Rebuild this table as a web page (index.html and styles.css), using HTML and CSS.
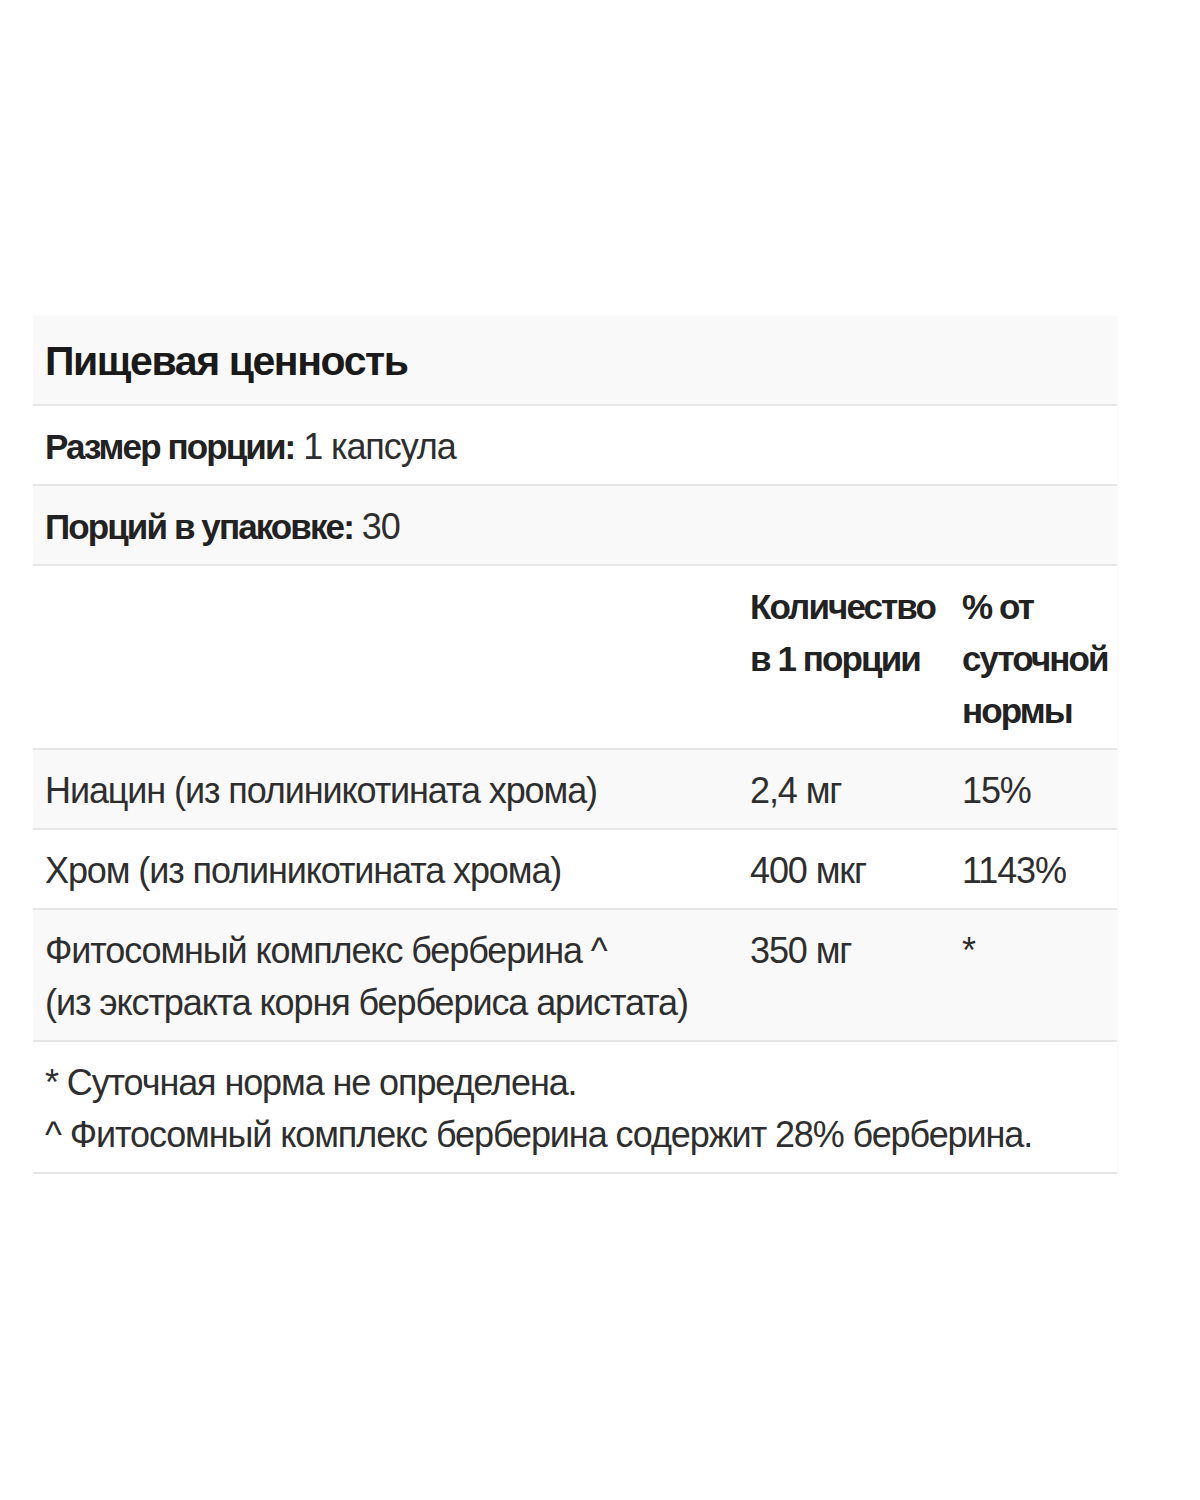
FILE: index.html
```html
<!DOCTYPE html>
<html lang="ru">
<head>
<meta charset="utf-8">
<link rel="stylesheet" href="styles.css">
</head>
<body>
<div class="page">
  <table class="facts">
    <tr class="title-row"><td colspan="3" class="title">Пищевая ценность</td></tr>
    <tr class="row"><td colspan="3"><b>Размер порции:</b> 1 капсула</td></tr>
    <tr class="row alt"><td colspan="3"><b>Порций в упаковке:</b> 30</td></tr>
    <tr class="row head">
      <td class="c1"></td>
      <td class="c2"><b>Количество в&nbsp;1&nbsp;порции</b></td>
      <td class="c3"><b>% от суточной нормы</b></td>
    </tr>
    <tr class="row alt">
      <td class="c1">Ниацин (из полиникотината хрома)</td>
      <td class="c2">2,4 мг</td>
      <td class="c3">15%</td>
    </tr>
    <tr class="row">
      <td class="c1">Хром (из полиникотината хрома)</td>
      <td class="c2">400 мкг</td>
      <td class="c3">1143%</td>
    </tr>
    <tr class="row alt">
      <td class="c1">Фитосомный комплекс берберина ^<br>(из экстракта корня бербериса аристата)</td>
      <td class="c2">350 мг</td>
      <td class="c3">*</td>
    </tr>
    <tr class="row">
      <td colspan="3">* Суточная норма не определена.<br>^ Фитосомный комплекс берберина содержит 28% берберина.</td>
    </tr>
  </table>
</div>
</body>
</html>
```

FILE: styles.css
```css
html, body {
  margin: 0;
  padding: 0;
  background: #ffffff;
}
.page {
  padding: 316px 0 0 33px;
}
.facts {
  width: 1084px;
  border-collapse: collapse;
  font-family: "Liberation Sans", Arial, sans-serif;
  color: #2e2e2e;
  font-size: 36px;
  line-height: 52px;
  letter-spacing: -1.1px;
  box-shadow: 1px 0 3px rgba(0,0,0,0.03);
}
.facts td {
  padding: 15px 12px 11px;
  vertical-align: top;
  border-bottom: 2px solid #e6e6e6;
  text-align: left;
  white-space: nowrap;
}
.facts b {
  font-weight: bold;
  font-size: 35px;
  color: #222222;
  letter-spacing: -1.9px;
}
.title-row td {
  background: #f9f9f9;
  font-size: 41px;
  font-weight: bold;
  color: #1a1a1a;
  letter-spacing: -1.4px;
  padding: 19px 12px 17px;
}
.alt td {
  background: #f9f9f9;
}
.head .c2, .head .c3 {
  white-space: normal;
}
.c1 { width: 681px; }
.c2 { width: 188px; }
.facts .c3 { width: 151px; padding-right: 4px; }
```
